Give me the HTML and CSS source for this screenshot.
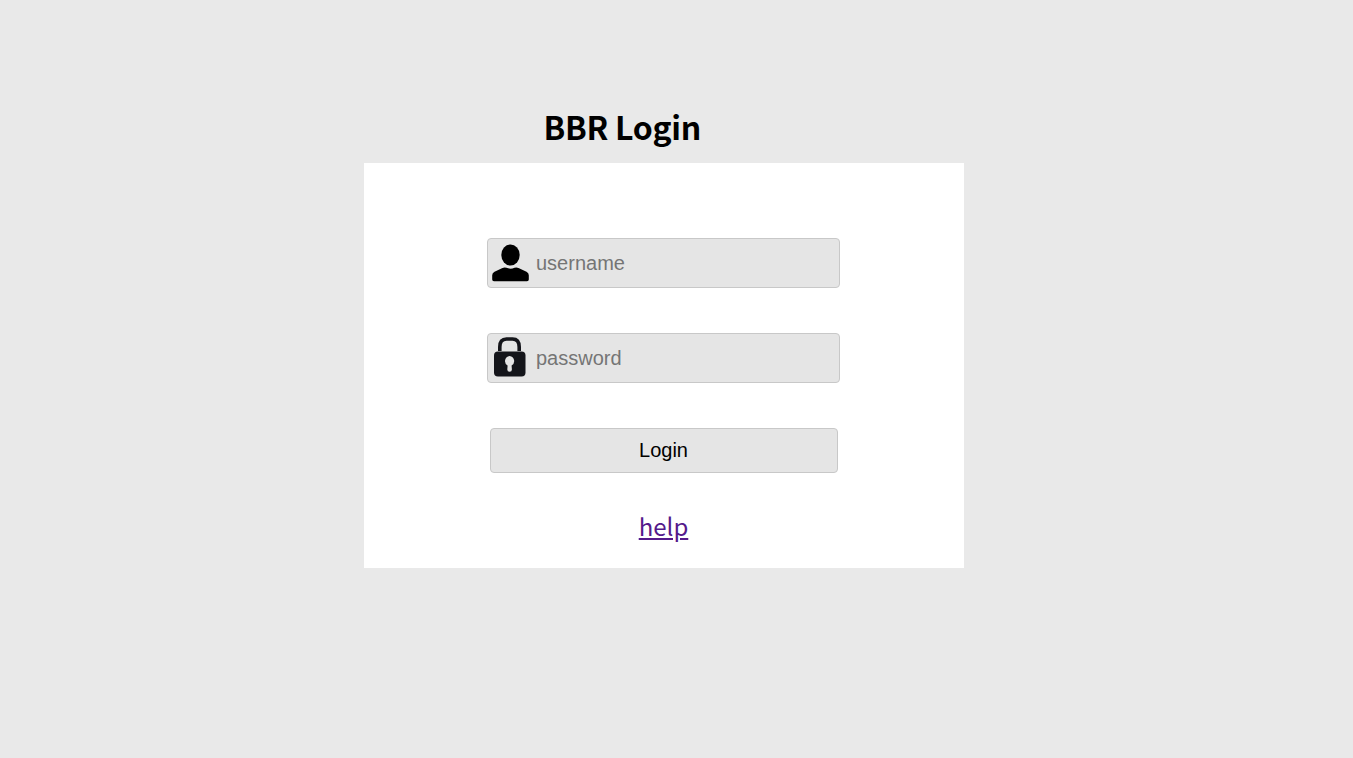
FILE: index.html
```
<!DOCTYPE html>
<html lang="en">
<head>
    <meta charset="UTF-8">
    <meta name="viewport" content="width=device-width, initial-scale=1.0">
    <title>BBR Login</title>
    <link rel="stylesheet" href="styles.css">
</head>
<body>
    <div class="login">
        <h1>BBR Login</h1>
        <form class="box">
            <div class="field">
                <svg class="icon" viewBox="0 0 44 48">
                    <ellipse cx="22.5" cy="16" rx="9.2" ry="10.5"/>
                    <path d="M4.2 40.5V36.2Q4.2 34 6.5 32.8L14.5 28.900Q16.500 28 18.500 28.800Q22.500 30.500 26.500 28.800Q28.500 28 30.500 28.900L38.500 32.800Q40.800 34 40.800 36.200V40.500Q40.800 42.200 39 42.200H6Q4.200 42.200 4.200 40.500Z"/>
                </svg>
                <input type="text" placeholder="username">
            </div>
            <div class="field">
                <svg class="icon lock" viewBox="0 0 44 48">
                    <path class="shackle" d="M11.800 17V13Q11.800 5 18.500 5H24.500Q31.200 5 31.200 13V17"/>
                    <rect x="6" y="17.500" width="31.500" height="25" rx="4"/>
                    <path class="keyhole" d="M21.600 22A5.100 5.100 0 0 0 19.600 31.500L19.300 35.500Q19.300 37.700 21.600 37.700Q23.900 37.700 23.900 35.500L23.600 31.500A5.100 5.100 0 0 0 21.600 22Z"/>
                </svg>
                <input type="password" placeholder="password">
            </div>
            <button type="button">Login</button>
            <a href="#">help</a>
        </form>
    </div>
</body>
</html>
```
FILE: styles.css
```
* {
    margin: 0;
    padding: 0;
    box-sizing: border-box;
}
body {
    background-color: #e9e9e9;
    font-family: "Noto Sans CJK SC", "Noto Sans", sans-serif;
}
.login {
    width: 600px;
    margin-left: 364px;
    padding-top: 101px;
}
h1 {
    height: 62px;
    margin-left: 179.5px;
    font-size: 32px;
    line-height: 51px;
    letter-spacing: -0.3px;
}
.box {
    display: flex;
    flex-direction: column;
    align-items: center;
    height: 405px;
    padding-top: 75px;
    background-color: #fff;
}
.field {
    display: flex;
    align-items: center;
    width: 353px;
    height: 50px;
    margin-bottom: 45px;
    margin-right: 1px;
    border: 1px solid #c8c8c8;
    border-radius: 4px;
    background-color: #e5e5e5;
}
.icon {
    width: 44px;
    height: 48px;
    flex-shrink: 0;
}
.lock {
    fill: #14151a;
}
.shackle {
    fill: none;
    stroke: #14151a;
    stroke-width: 3.6;
}
.keyhole {
    fill: #e5e5e5;
}
input {
    width: 300px;
    height: 48px;
    padding-left: 4px;
    border: none;
    outline: none;
    background: transparent;
    font-family: "Liberation Sans", Arial, sans-serif;
    font-size: 20px;
}
input::placeholder {
    color: #757575;
}
button {
    width: 348px;
    height: 45px;
    padding-right: 1px;
    border: 1px solid #c8c8c8;
    border-radius: 4px;
    background-color: #e5e5e5;
    color: #000;
    font-family: "Liberation Sans", Arial, sans-serif;
    font-size: 20px;
}
a {
    margin-top: 33px;
    margin-right: 1px;
    font-size: 24px;
    line-height: 39px;
    color: #551a8b;
}
```
